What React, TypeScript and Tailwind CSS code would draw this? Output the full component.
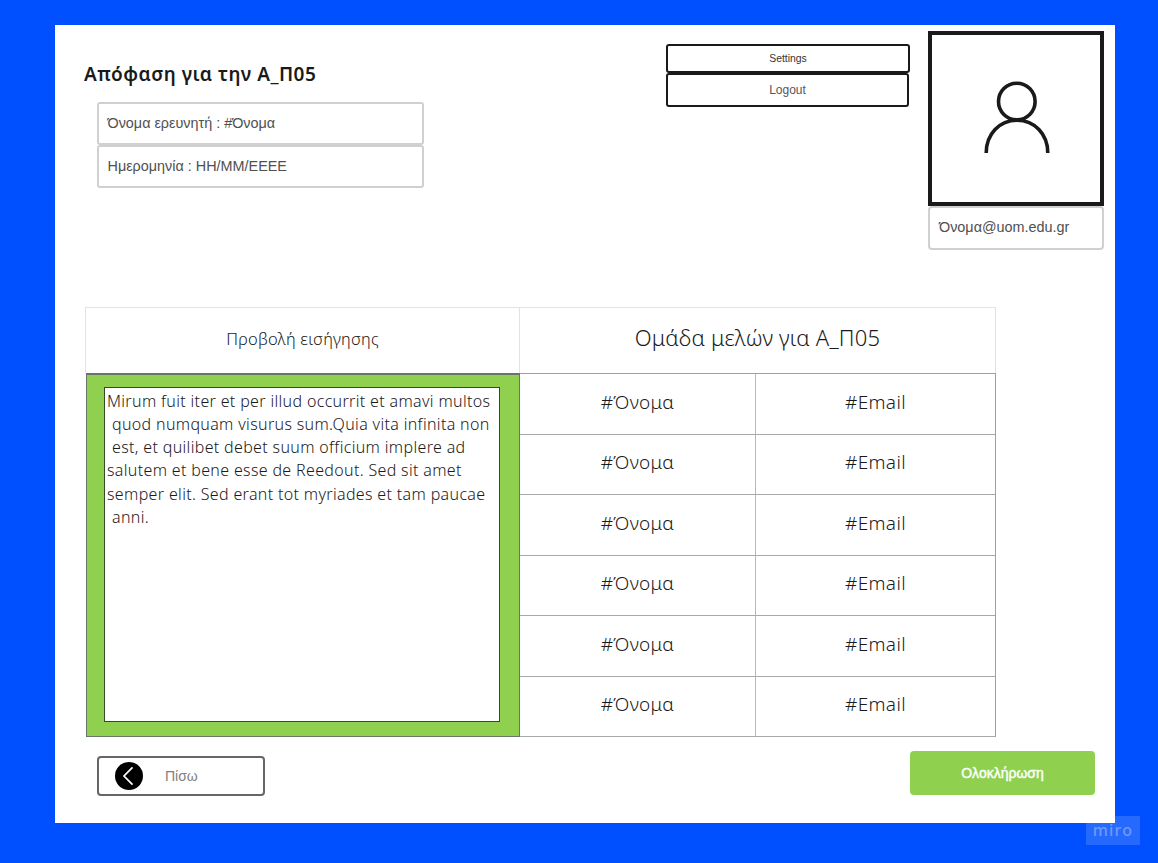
const members = [1, 2, 3, 4, 5, 6];

const lines = [
  { text: 'Mirum fuit iter et per illud occurrit et amavi multos', indent: false },
  { text: 'quod numquam visurus sum.Quia vita infinita non', indent: true },
  { text: 'est, et quilibet debet suum officium implere ad', indent: true },
  { text: 'salutem et bene esse de Reedout. Sed sit amet', indent: false },
  { text: 'semper elit. Sed erant tot myriades et tam paucae', indent: false },
  { text: 'anni.', indent: true },
];

function Header() {
  return (
    <header className="flex h-[282px] items-start">
      <div className="w-[611px] pl-[29px] pt-[34px]">
        <h1 className="h-[43px] whitespace-nowrap font-['Noto_Sans',sans-serif] text-[19px] font-semibold leading-[30px] tracking-[0.5px]">
          Απόφαση για την Α_Π05
        </h1>
        <div className="ml-[13px] w-[327px] text-[14.4px] text-[#505050]">
          <div className="flex h-[43px] items-center rounded-[3px] border-2 border-[#d0d0d0] px-[8.5px]">Όνομα ερευνητή : #Όνομα</div>
          <div className="flex h-[43px] items-center rounded-[3px] border-2 border-[#d0d0d0] px-[8.5px]">Ημερομηνία : HH/MM/ΕΕΕΕ</div>
        </div>
      </div>
      <div className="w-[244px] pt-[19px] text-[#333]">
        <button className="flex h-[29px] w-[244px] items-center justify-center rounded-[3px] border-2 border-[#1a1a1a] text-[10.4px]">Settings</button>
        <button className="flex h-[34px] w-[243px] items-center justify-center rounded-[3px] border-2 border-[#1a1a1a] text-[12px] text-[#555]">Logout</button>
      </div>
      <div className="ml-[18px] w-[176px] pt-[6px]">
        <div className="flex h-[175px] items-center justify-center border-[4px] border-[#1a1a1a]">
          <svg className="h-[167px] w-[168px]" viewBox="0 0 168 167" fill="none" stroke="#1a1a1a" strokeWidth="3.6">
            <circle cx="84.800" cy="66.500" r="18.3" />
            <path d="M54.2 118C54.2 99 67.5 85.2 85 85.2S115.800 99 115.800 118" />
          </svg>
        </div>
        <div className="flex h-[44px] items-center rounded-[4px] border-2 border-[#d0d0d0] px-[9px] text-[14.4px] text-[#505050]">Όνομα@uom.edu.gr</div>
      </div>
    </header>
  );
}

function Board() {
  return (
    <section className="ml-[30px] w-[911px] font-['Noto_Sans',sans-serif] font-light">
      <div className="flex h-[66px] border-t border-l border-[#e3e3e3]">
        <div className="flex w-[434px] items-center justify-center border-r border-[#e3e3e3] pb-[3px] text-[16.5px] tracking-[0.2px]">Προβολή εισήγησης</div>
        <div className="flex w-[476px] items-center justify-center border-r border-[#e3e3e3] pb-[6px] text-[22px] tracking-[0.2px]">Ομάδα μελών για Α_Π05</div>
      </div>
      <div className="flex h-[364px]">
        <div className="ml-px w-[434px] border border-t-2 border-[#68766a] bg-[#8fd14f] pb-[14px] pl-[17px] pr-[19px] pt-[12px]">
          <div className="h-[335px] border border-[#374a28] bg-white pl-[2px] pt-[2px] text-[16px] leading-[23.15px] tracking-[0.34px]">
            {lines.map((line) => (
              <p key={line.text} className={line.indent ? 'whitespace-nowrap pl-[5px]' : 'whitespace-nowrap'}>
                {line.text}
              </p>
            ))}
          </div>
        </div>
        <div className="grid w-[476px] grid-rows-6 border-t border-r border-[#a0a0a0] text-[19px] tracking-[0.35px]">
          {members.map((member) => (
            <div key={member} className="flex border-b border-[#a8a8a8]">
              <div className="flex w-[236px] items-center justify-center border-r border-[#b8b8b8] pb-1">#Όνομα</div>
              <div className="flex flex-1 items-center justify-center pb-1">#Email</div>
            </div>
          ))}
        </div>
      </div>
    </section>
  );
}

function Footer() {
  return (
    <footer className="flex items-start justify-between pl-[42px] pr-5 pt-[14px]">
      <button className="mt-[5px] flex h-[40px] w-[168px] items-center rounded-[4px] border-2 border-[#666] pl-4 text-[14px] text-[#808080]">
        <svg className="h-7 w-7" viewBox="0 0 28 28" fill="none">
          <circle cx="14" cy="14" r="14" fill="#000" />
          <path d="M17.500 5.300 9 14l8.500 8.700" stroke="#fff" strokeWidth="1.700" />
        </svg>
        <span className="ml-[22px]">Πίσω</span>
      </button>
      <button className="flex h-[44px] w-[185px] items-center justify-center rounded-[4px] bg-[#8fd14f] text-[14px] text-white [-webkit-text-stroke:0.4px_white]">Ολοκλήρωση</button>
    </footer>
  );
}

export default function App() {
  return (
    <div className="relative h-[863px] w-[1158px] overflow-hidden bg-[#0050ff] pl-[55px] pt-[25px] font-['Liberation_Sans',sans-serif] text-[#1a1a1a]">
      <div className="absolute left-[1086px] top-[816px] flex h-[29px] w-[54px] items-center justify-center bg-[#2669ff] pb-[2px] font-['Noto_Sans',sans-serif] text-[16px] font-medium tracking-[1.2px] text-[#6e99f8]">miro</div>
      <main className="relative h-[798px] w-[1060px] bg-white">
        <Header />
        <Board />
        <Footer />
      </main>
    </div>
  );
}
